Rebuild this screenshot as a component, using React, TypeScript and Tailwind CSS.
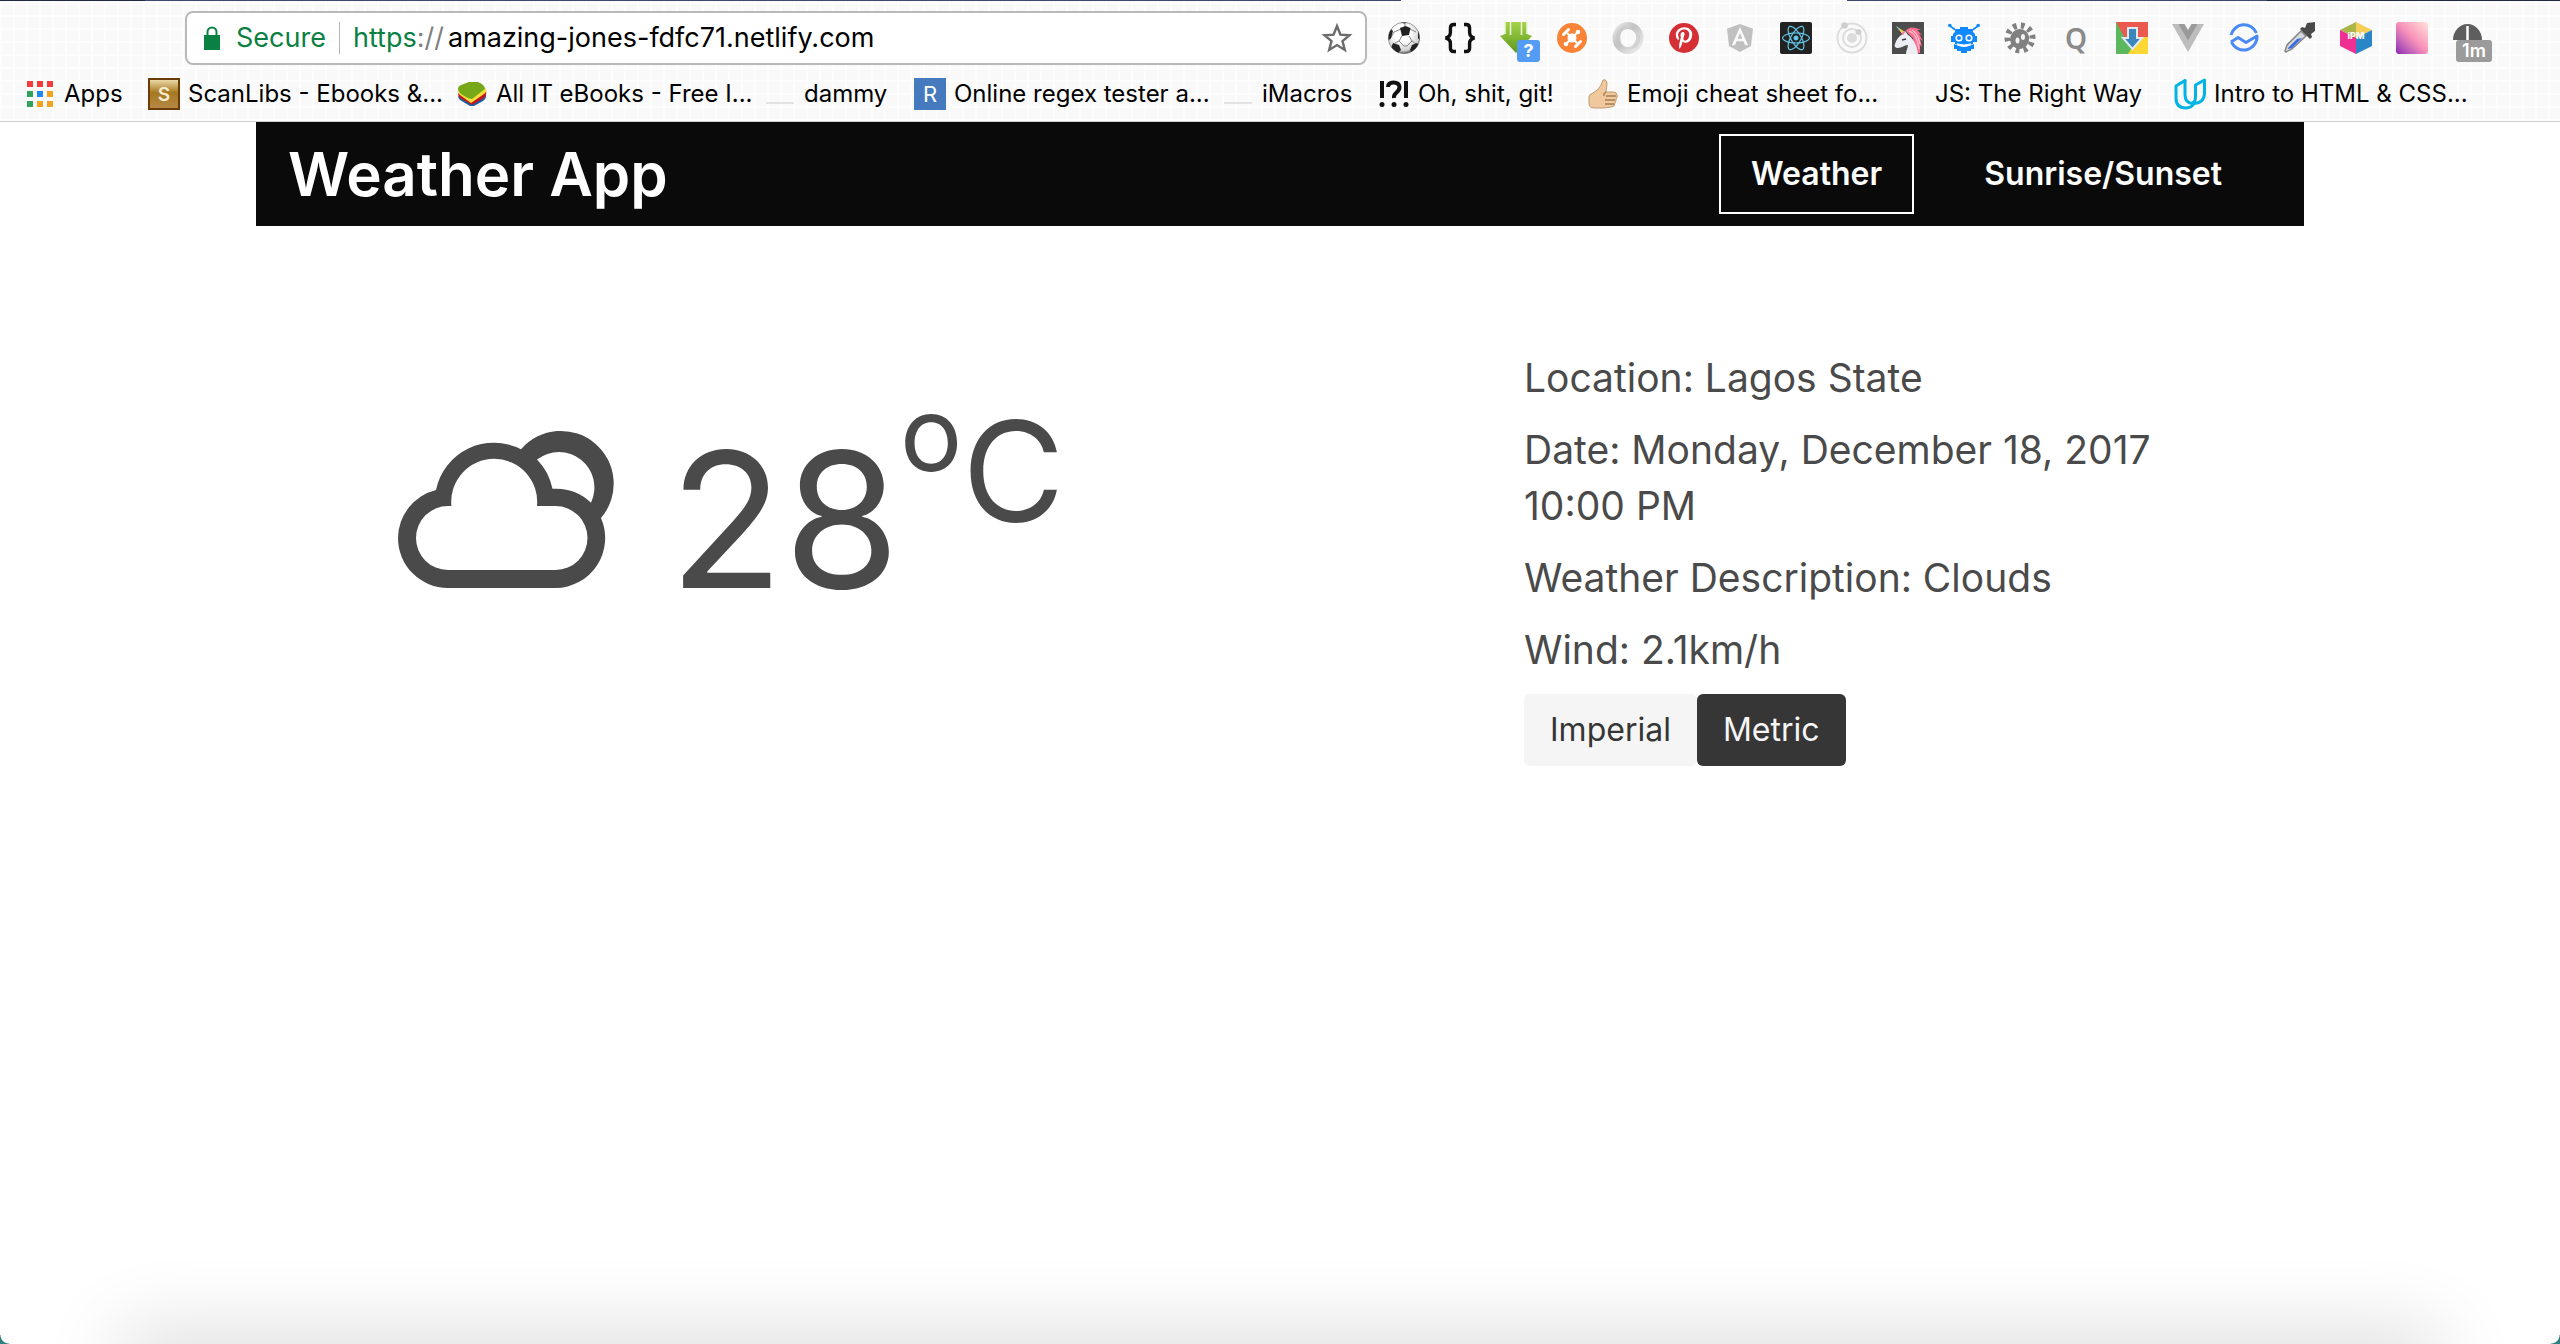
import React from "react";
import { FaReact, FaPinterestP, FaAngular } from "react-icons/fa";

function Svg({ children, className = "size-8" }: { children: React.ReactNode; className?: string }) {
  return (
    <svg viewBox="0 0 32 32" className={"shrink-0 " + className} aria-hidden="true">
      {children}
    </svg>
  );
}

const Soccer = () => (
  <Svg>
    <defs>
      <radialGradient id="ball" cx="0.45" cy="0.35" r="0.65">
        <stop offset="0.4" stopColor="#fff" />
        <stop offset="0.85" stopColor="#d0d0d0" />
        <stop offset="1" stopColor="#555" />
      </radialGradient>
      <clipPath id="ballClip">
        <circle cx="16" cy="16" r="15.5" />
      </clipPath>
    </defs>
    <circle cx="16" cy="16" r="15.7" fill="url(#ball)" stroke="#666" strokeWidth="0.6" />
    <g clipPath="url(#ballClip)">
      <path d="M17 5V0M13 7L6 10M22 7l6 3M14 14l-3 5M21 14l3 5M11 19l-4 2M11 19l5 5M24 19l-5 5M24 19l4 3M16 24h3M6 10L2 17" stroke="#777" strokeWidth="0.9" fill="none" />
      <g fill="#222">
        <path d="M12 6l5.500-2 5 2-1.500 7-7 1z" />
        <path d="M0 12l3-5 2 2-2 7-3 3z" />
        <path d="M30 8l2 3v8l-2-3z" />
        <path d="M5 21l6 2 2 5-4 4-6-6z" />
        <path d="M24 23l5-2 3 4-7 7-3-4z" />
        <path d="M11 0h10l-5 1.500z" />
      </g>
    </g>
  </Svg>
);

const Braces = () => (
  <Svg>
    <g fill="none" stroke="#111" strokeWidth="3.400">
      <path d="M12 2.500H10q-3.600 0-3.600 3.600v4.500q0 4.400-4.900 5.400q4.900 1 4.900 5.400v4.500q0 3.600 3.600 3.600h2" />
      <path d="M20 2.500h2q3.600 0 3.600 3.600v4.500q0 4.400 4.900 5.400q-4.900 1-4.900 5.400v4.500q0 3.600-3.600 3.600h-2" />
    </g>
  </Svg>
);

const Download = () => (
  <div className="relative size-8">
    <Svg>
      <defs>
        <linearGradient id="dl" x1="0" y1="0" x2="0" y2="1">
          <stop offset="0" stopColor="#a4d34a" />
          <stop offset="1" stopColor="#5d9a1c" />
        </linearGradient>
      </defs>
      <path d="M5 0h22v12l5 2-16 17L0 14l5-2z" fill="url(#dl)" />
      <path d="M10.500 0v13M21.500 0v13M5 0v12M27 0v12" stroke="#e9f6d2" strokeWidth="1.600" />
    </Svg>
    <span className="absolute top-[18px] left-[17px] flex h-[22px] w-[23px] items-center justify-center rounded-[3px] bg-[#549bf3] text-[18px] leading-none font-bold text-white">
      ?
    </span>
  </div>
);

const OrangeHub = () => (
  <Svg>
    <circle cx="16" cy="16" r="15" fill="#f98437" />
    <circle cx="16" cy="16" r="4.500" fill="#fff" />
    <path d="M11 11l10 10M21 11L11 21" stroke="#fff" strokeWidth="2.200" />
    <path d="M7.500 12.500l5-5M19.500 24.500l5-5" stroke="#fff" strokeWidth="3" strokeLinecap="round" />
    <circle cx="22" cy="10" r="2.300" fill="#fff" />
    <circle cx="10" cy="22" r="2.300" fill="#fff" />
  </Svg>
);

const Ring = () => (
  <Svg>
    <defs>
      <linearGradient id="ring" x1="0" y1="0" x2="1" y2="1">
        <stop offset="0" stopColor="#e4e4e4" />
        <stop offset="0.4" stopColor="#c2c2c2" />
        <stop offset="1" stopColor="#ececec" />
      </linearGradient>
    </defs>
    <ellipse cx="16" cy="16" rx="12" ry="12.500" fill="none" stroke="url(#ring)" strokeWidth="7" />
    <path d="M20 4C9 2 5 16 12 27C-1 23 1 1 20 4z" fill="#c4c4c4" opacity="0.600" />
    <path d="M15 27C25 24 27 11 21 6C33 12 29 29 15 27z" fill="#cfcfcf" opacity="0.800" />
  </Svg>
);

const Pinterest = () => (
  <span className="flex size-[30px] items-center justify-center rounded-full bg-[#d32f35]">
    <FaPinterestP className="size-[22px] text-white" />
  </span>
);

const ReactTile = () => (
  <span className="flex size-8 items-center justify-center rounded-[2px] bg-[#222]">
    <FaReact className="size-7 text-[#61c8e8]" />
  </span>
);

const Orbit = () => (
  <Svg>
    <g fill="none" stroke="#dcdcdc">
      <circle cx="16" cy="16" r="14.500" strokeWidth="1.800" />
      <circle cx="16" cy="16" r="9" strokeWidth="2" />
    </g>
    <circle cx="16" cy="16" r="5" fill="#dcdcdc" />
    <circle cx="8.500" cy="3.500" r="3.300" fill="#cfcfcf" />
    <circle cx="22.500" cy="10" r="3" fill="#cfcfcf" />
  </Svg>
);

const Unicorn = () => (
  <Svg>
    <path d="M0 0h32v32H0z" fill="#4d4d4d" />
    <path d="M13 10C17 4 22 5 29 8l-4 0 5 5-3-1 4 7-3-2 2 8-2-2v8h-4l-3-15-7-7z" fill="#ff6f91" />
    <path d="M17 9c6 2 9 9 10 18M20 8c5 3 7 8 8 14" stroke="#ffc0cf" strokeWidth="1.200" fill="none" />
    <path d="M11 12l2-3 3 4c5 3 9 10 10 19H14c0-4 2-6 2-9-4 0-6 3-10 3-3 0-4-2-3-4 1-4 4-8 8-10z" fill="#eceef3" />
    <path d="M10 18l4-1" stroke="#3a3a3a" strokeWidth="1.500" />
    <path d="M4 4l7 9 2-3z" fill="#f7d154" />
    <path d="M4 4l3 4 1-1z" fill="#57c7e8" />
    <path d="M11 13l-1.500-2 2-1.500 1.500 1z" fill="#f07ab0" />
  </Svg>
);

const Robot = () => (
  <Svg>
    <g fill="#1089ff">
      <path d="M8 7h4V5h8v2h4l1 3 2 2v2h2v6h-4v-3H7v3H3v-6h2v-2l2-2z" />
      <path d="M7 14h18v8q-9 3-18 0z" />
      <path d="M6 22q10 5 20 0v5h-3v2h-4v2h-6v-2H9v-2H6z" />
      <circle cx="1.800" cy="3.500" r="1.800" />
      <circle cx="30.200" cy="3.500" r="1.800" />
    </g>
    <path d="M2 4l7 5M30 4l-7 5" stroke="#1089ff" strokeWidth="1.600" />
    <g fill="#1089ff" stroke="#fff" strokeWidth="1.600">
      <circle cx="11" cy="16" r="2.800" />
      <circle cx="21" cy="16" r="2.800" />
    </g>
    <path d="M9 22q7 5 14 0-7 2-14 0z" fill="#fff" stroke="#fff" />
  </Svg>
);

const Gear = () => (
  <Svg>
    <g transform="rotate(20 16 16)">
      <ellipse cx="16" cy="17" rx="9.500" ry="10" fill="#808080" />
      <circle cx="16" cy="16" r="12.500" fill="none" stroke="#808080" strokeWidth="6" strokeDasharray="3.700 4.154" />
    </g>
    <ellipse cx="13.500" cy="18.500" rx="2" ry="3" fill="#f3f3f3" />
    <ellipse cx="19" cy="15" rx="2" ry="3" fill="#f3f3f3" />
  </Svg>
);

const Chrome = () => (
  <Svg>
    <path d="M0 0h32v32H0z" fill="#5cb85f" />
    <path d="M0 0h32v15H22L10 18z" fill="#ea5a4f" />
    <path d="M32 15v17H12l11-17z" fill="#fdd835" />
    <path d="M12 6h9v10h5L16.500 27 7 16h5z" fill="#3a87bd" stroke="#dfeaf2" strokeWidth="2" />
  </Svg>
);

const Vue = () => (
  <Svg>
    <path d="M0 2h32L16 30z" fill="#bdbdbd" />
    <path d="M6.500 2h19L16 18.500z" fill="#9a9a9a" />
    <path d="M12.500 2h7L16 8z" fill="#f8f8f8" />
  </Svg>
);

const Wave = () => (
  <Svg>
    <g fill="none" stroke="#4b8af5" strokeWidth="3">
      <path d="M3 13A13.500 13.500 0 0 1 28.500 11" />
      <path d="M3 20l7-4.500 8 5 11-6.500A13.300 13.300 0 0 1 3.500 20" strokeLinejoin="round" />
    </g>
  </Svg>
);

const Dropper = () => (
  <Svg>
    <path d="M1 29l2-6L17 9l5 5L8 27l-6 3z" fill="#d5d8de" stroke="#858585" strokeWidth="1.500" />
    <path d="M4 26l9-9 5-1L8 26l-4 1z" fill="#3c6be0" />
    <path d="M16 7l2-2 3 1 2-5 8-1v9l-4 3 1 3-2 2z" fill="#4a4a4a" />
  </Svg>
);

const Ipm = () => (
  <Svg>
    <path d="M16 0l16 8-16 8z" fill="#f5cf57" />
    <path d="M16 0L0 8l16 8z" fill="#a9b64a" />
    <path d="M0 8v16l16 8V16z" fill="#ef2f92" />
    <path d="M32 8v16l-16 8V16z" fill="#2a86c6" />
    <text x="16" y="17" textAnchor="middle" fontSize="9" fontWeight="800" fill="#fff">iPM</text>
  </Svg>
);

const Pink = () => (
  <span className="size-8 rounded-[3px] bg-linear-to-tr from-[#8d24b5] via-[#f78fb8] to-[#ffe3dc]" />
);

const Timer = () => (
  <div className="relative size-8">
    <Svg>
      <path d="M1 18a14.500 16 0 0 1 29 0z" fill="#5e5e5e" />
      <path d="M15.500 4v14" stroke="#fff" strokeWidth="2.500" />
    </Svg>
    <span className="absolute top-[18px] left-[4px] flex h-[22px] w-9 items-center justify-center rounded-[3px] bg-[#9b9b9b] text-[18px] leading-none font-semibold text-white">
      1m
    </span>
  </div>
);

const extensions: { name: string; icon: React.ReactNode }[] = [
  { name: "Football scores", icon: <Soccer /> },
  { name: "JSON viewer", icon: <Braces /> },
  { name: "Downloader", icon: <Download /> },
  { name: "Hub", icon: <OrangeHub /> },
  { name: "Ring", icon: <Ring /> },
  { name: "Pinterest", icon: <Pinterest /> },
  { name: "Angular", icon: <FaAngular className="size-8 text-[#c0c0c0]" /> },
  { name: "React", icon: <ReactTile /> },
  { name: "Orbit", icon: <Orbit /> },
  { name: "Unicorn", icon: <Unicorn /> },
  { name: "Robot", icon: <Robot /> },
  { name: "Gear", icon: <Gear /> },
  { name: "Q", icon: <span className="font-['Noto_Sans'] text-[28px] leading-8 font-semibold text-[#8a8a8a]">Q</span> },
  { name: "Chrome download", icon: <Chrome /> },
  { name: "Vue", icon: <Vue /> },
  { name: "Wave", icon: <Wave /> },
  { name: "Color picker", icon: <Dropper /> },
  { name: "IPM", icon: <Ipm /> },
  { name: "Gradient", icon: <Pink /> },
  { name: "Timer", icon: <Timer /> },
];

const AppsGrid = () => (
  <Svg>
    {["#f33c3c", "#f33c3c", "#f33c3c", "#2fa35c", "#1e88f5", "#f3a31c", "#2fa35c", "#f3a31c", "#f3a31c"].map((c, i) => (
      <rect key={i} x={3 + (i % 3) * 10} y={3 + Math.floor(i / 3) * 10} width="6" height="6" fill={c} />
    ))}
  </Svg>
);

const Scan = () => (
  <Svg>
    <defs>
      <linearGradient id="gold" x1="0" y1="0" x2="0" y2="1">
        <stop offset="0" stopColor="#efe0b0" />
        <stop offset="0.45" stopColor="#a87820" />
        <stop offset="1" stopColor="#b58a48" />
      </linearGradient>
    </defs>
    <path d="M1 1h30v30H1z" fill="url(#gold)" stroke="#6a3c08" strokeWidth="2" />
    <text x="16" y="23" textAnchor="middle" fontSize="19" fontWeight="600" fill="#f6ecd2">S</text>
  </Svg>
);

const Books = () => (
  <Svg>
    <path d="M2 18l13 7 15-10q1 5-3 8l-9 5h-4L4 22q-2-2-2-4z" fill="#1b5fa8" />
    <path d="M2 15l13 8 15-11q1 5-2 8l-12 7L4 20q-2-2-2-5z" fill="#c3161c" />
    <path d="M2 12l13 9 15-11q1 4-2 6l-13 9L4 17q-2-2-2-5z" fill="#f5e03a" />
    <path d="M2 11q0-3 3-4l8-3h9q7 3 7 7l-13 10q-3 0-6-2-8-4-8-8z" fill="#76a81a" />
  </Svg>
);

const Blank = () => (
  <Svg>
    <path d="M2 25h28" stroke="#e2e2e2" strokeWidth="2" />
  </Svg>
);

const RegexTile = () => (
  <span className="flex size-8 items-center justify-center bg-[#457abf] text-[22px] leading-none text-white">R</span>
);

const Interrobang = () => (
  <Svg>
    <g fill="none" stroke="#111" strokeWidth="4">
      <path d="M4 3v17M28 3v17" />
      <path d="M10 9q0-4.500 5.500-4.500T21.500 9q0 3-3 5.500T16 20" />
    </g>
    <g fill="#111">
      <circle cx="4" cy="26.500" r="2.500" />
      <circle cx="16" cy="26.500" r="2.500" />
      <circle cx="28" cy="26.500" r="2.500" />
    </g>
  </Svg>
);

const Thumb = () => (
  <Svg>
    <path d="M16 2q4-1 4 4l-1 8h7q4 0 4 3 1 2-1 4 0 3-1 4 0 4-4 4-5 1-9 1H7q-5 0-5-5v-6q0-3 4-4 6-3 8-8z" fill="#f0c89e" stroke="#c09a70" strokeWidth="1" />
    <path d="M19 14q-3 2-2 4M19 18h10M18 22h10M18 26h9" stroke="#a87c50" strokeWidth="1.300" fill="none" />
  </Svg>
);

const Udacity = () => (
  <Svg>
    <g fill="none" stroke="#02b3e4" strokeWidth="3" strokeLinejoin="round" strokeLinecap="round">
      <path d="M11 2.500L2 8v12q0 10 10 10q5 0 8-4.500" />
      <path d="M11 2.500v14q0 9 8 9q11 0 11.500-10V2L21.500 7v12q0 5-3 6" />
    </g>
  </Svg>
);

const bookmarks: { label: string; icon: React.ReactNode; width: string }[] = [
  { label: "Apps", icon: <AppsGrid />, width: "w-[124px]" },
  { label: "ScanLibs - Ebooks &...", icon: <Scan />, width: "w-[308px]" },
  { label: "All IT eBooks - Free I...", icon: <Books />, width: "w-[308px]" },
  { label: "dammy", icon: <Blank />, width: "w-[150px]" },
  { label: "Online regex tester a...", icon: <RegexTile />, width: "w-[308px]" },
  { label: "iMacros", icon: <Blank />, width: "w-[156px]" },
  { label: "Oh, shit, git!", icon: <Interrobang />, width: "w-[209px]" },
  { label: "Emoji cheat sheet fo...", icon: <Thumb />, width: "w-[308px]" },
  { label: "JS: The Right Way", icon: <span className="size-8 shrink-0" />, width: "w-[279px]" },
  { label: "Intro to HTML & CSS...", icon: <Udacity />, width: "w-[308px]" },
];

function BrowserChrome() {
  return (
    <header className="border-b border-[#cfcfcf] bg-[repeating-linear-gradient(90deg,#fdfdfd_0_2px,transparent_2px_13px),repeating-linear-gradient(0deg,#fdfdfd_0_2px,#f9f9f9_2px_13px)]">
      <div className="flex h-px">
        <span className="w-[145px] bg-[#23283c]" />
        <span className="flex-1 bg-[#3c4a6e]" />
        <span className="w-[446px] bg-[#fcfcfc]" />
        <span className="w-[420px] bg-[#3c4a6e]" />
        <span className="w-[293px] bg-[#23283c]" />
      </div>
      <div className="flex items-center pt-[10px] pr-[76px] pl-[185px]">
        <form className="flex h-[54px] min-w-0 flex-1 items-center rounded-lg border-2 border-[#b9b9b9] bg-white pr-3 pl-4">
          <svg viewBox="0 0 18 24" className="h-6 w-[18px] shrink-0" aria-hidden="true">
            <path d="M1 9h16v15H1z" fill="#0b8043" />
            <path d="M4.500 10V6a4.500 4.500 0 0 1 9 0v4" fill="none" stroke="#0b8043" strokeWidth="2" />
          </svg>
          <span className="ml-[15px] text-[27px] text-[#0b8043]">Secure</span>
          <span className="mx-[13px] h-8 w-px bg-[#b5b5b5]" />
          <label htmlFor="address" className="mr-1 text-[27px] text-[#808080]">
            <span className="text-[#0b8043]">https</span>://
          </label>
          <input
            id="address"
            defaultValue="amazing-jones-fdfc71.netlify.com"
            className="min-w-0 flex-1 bg-transparent text-[27px] text-black outline-none"
          />
          <button type="button" aria-label="Bookmark this page">
            <svg viewBox="0 0 32 32" className="size-8" aria-hidden="true">
              <path d="M16 4l3.400 8.600 9.100.600-7 5.900 2.300 8.900-7.800-4.900L8.200 28l2.300-8.900-7-5.900 9.100-.600z" fill="none" stroke="#6b6b6b" strokeWidth="2.400" />
            </svg>
          </button>
        </form>
        <div className="ml-[21px] flex gap-6">
          {extensions.map((e) => (
            <button key={e.name} type="button" aria-label={e.name} className="flex size-8 items-center justify-center">
              {e.icon}
            </button>
          ))}
        </div>
      </div>
      <nav className="flex h-[56px] items-center pt-[2px] pl-6" aria-label="Bookmarks">
        {bookmarks.map((b) => (
          <a key={b.label} href="#" className={"flex shrink-0 items-center gap-2 text-2xl whitespace-nowrap text-black " + b.width}>
            {b.icon}
            {b.label}
          </a>
        ))}
      </nav>
    </header>
  );
}

function CloudIcon() {
  return (
    <svg viewBox="0 0 215 156" className="h-[156px] w-[215px] shrink-0 overflow-visible" role="img" aria-label="Clouds">
      <path
        fill="#4a4a4a"
        fillRule="evenodd"
        d="M0 106A50 50 0 0 1 38 58A59 59 0 0 1 123 17.300A52.700 52.700 0 0 1 203 86A50 50 0 0 1 157.500 156H50A50 50 0 0 1 0 106ZM53.400 74A43 43 0 1 1 139 74H157.500A32 32 0 0 1 157.500 138H50A32 32 0 0 1 50 74ZM139 27.600A35.500 35.500 0 0 1 193 70.700A50 50 0 0 0 157.500 56.700H154.500A59 59 0 0 0 139 27.600Z"
      />
    </svg>
  );
}

export default function App() {
  return (
    <div className="relative flex min-h-screen flex-col overflow-hidden bg-white font-['Inter',sans-serif]">
      <BrowserChrome />
      <main className="mx-auto w-4/5 flex-1">
        <nav className="flex h-[104px] items-center bg-[#0a0a0a] pr-12 pl-8 text-white" aria-label="Main">
          <h1 className="flex-1 text-[60px] leading-none font-semibold">Weather App</h1>
          <a href="#weather" className="flex h-20 items-center border-2 border-white px-[30px] text-[32px] font-semibold">
            Weather
          </a>
          <a href="#sun" className="ml-9 flex h-20 items-center border-2 border-transparent px-8 text-[32px] font-semibold">
            Sunrise/Sunset
          </a>
        </nav>
        <div className="flex items-start justify-between pt-[124px] pr-[128px] pl-[142px] text-[#4a4a4a]">
          <section className="flex items-end pt-[82px]">
            <CloudIcon />
            <div className="ml-14 text-[188px] leading-[136px]">
              28
              <sup className="relative -top-[66px] text-[140px] leading-[0]">
                <sup className="relative -top-[51px] text-[104px] leading-[0]">o</sup>C
              </sup>
            </div>
          </section>
          <section className="flex w-[652px] flex-col gap-4 text-[39px] leading-[56px]">
            <p>Location: Lagos State</p>
            <p>Date: Monday, December 18, 2017 10:00 PM</p>
            <p>Weather Description: Clouds</p>
            <p>Wind: 2.1km/h</p>
            <div className="flex text-[32px]">
              <button type="button" className="h-[72px] rounded-md bg-[#f5f5f5] px-[26px] text-[#363636]">Imperial</button>
              <button type="button" className="h-[72px] rounded-md bg-[#363636] px-[26px] text-[#f5f5f5]">Metric</button>
            </div>
          </section>
        </div>
      </main>
      <div className="absolute inset-x-[130px] -bottom-10 h-10 shadow-[0_0_80px_10px_rgba(0,0,0,0.16)]" />
      <div className="absolute bottom-0 left-0 size-[9px] bg-[radial-gradient(circle_at_100%_0,transparent_8px,#2e7f7f_9px)]" />
      <div className="absolute right-0 bottom-0 size-[9px] bg-[radial-gradient(circle_at_0_0,transparent_8px,#2e7f7f_9px)]" />
    </div>
  );
}
